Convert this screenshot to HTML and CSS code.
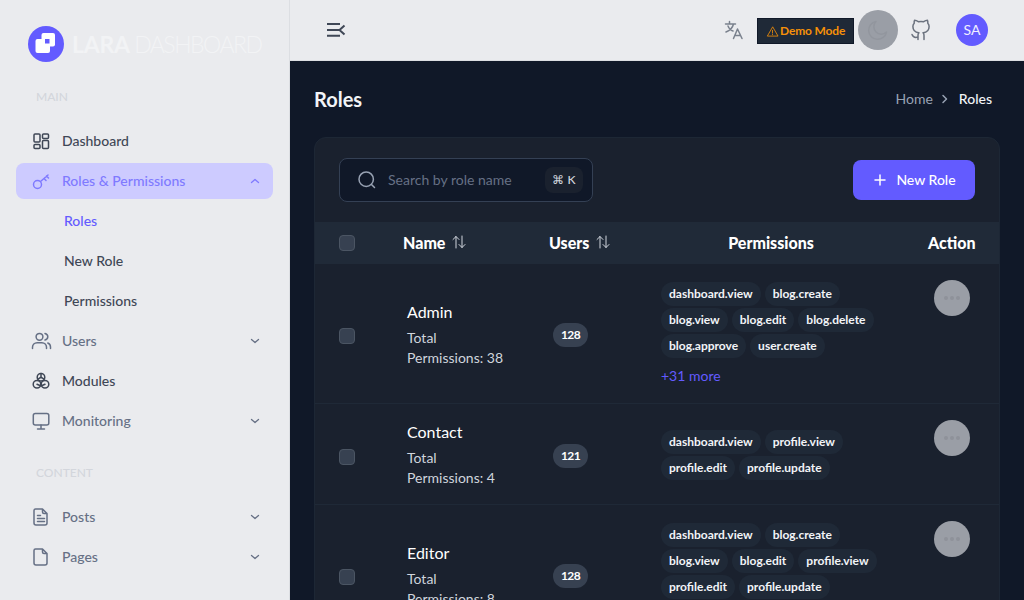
FILE: index.html
```html
<!DOCTYPE html>
<html>
<head>
    <title>Roles</title>
    <meta charset="UTF-8">
    <link rel="stylesheet" href="styles.css">
</head>
<body>
    <aside class="sidebar">
        <div class="logo">
            <svg class="logo-mark" width="36" height="36" viewBox="0 0 36 36">
                <circle cx="18" cy="18" r="18" fill="#635bff"/>
                <rect x="13.500" y="7" width="13.500" height="13.500" rx="2" fill="#fff"/>
                <rect x="7.500" y="13" width="14.500" height="14" rx="2" fill="#fff"/>
                <rect x="17" y="13" width="4.500" height="4.500" fill="#635bff"/>
            </svg>
            <span class="logo-text"><b>LARA</b> <span>DASHBOARD</span></span>
        </div>
        <div class="nav-label">MAIN</div>
        <ul class="nav">
            <li class="nav-item dark">
                <svg class="icon" viewBox="0 0 24 24"><rect x="5" y="5" width="6" height="8" rx="1"/><rect x="13.500" y="5" width="6" height="4.500" rx="1"/><rect x="5" y="15.500" width="6" height="4" rx="1"/><rect x="13.500" y="11.500" width="6" height="8" rx="1"/></svg>
                Dashboard
            </li>
            <li class="nav-item active">
                <svg class="icon" viewBox="0 0 24 24"><circle cx="8.500" cy="15.500" r="4"/><path d="M11.500 12.500 19 6M15 9.500l2 2M17.500 7l2 2"/></svg>
                Roles &amp; Permissions
                <svg class="caret" viewBox="0 0 16 16"><path d="M4.500 9.500 8 6.500l3.500 3"/></svg>
            </li>
            <li class="sub-item current">Roles</li>
            <li class="sub-item">New Role</li>
            <li class="sub-item">Permissions</li>
            <li class="nav-item">
                <svg class="icon" viewBox="0 0 24 24"><circle cx="10.500" cy="7.800" r="3.400"/><path d="M3.500 19.500v-1.200c0-2.600 2-4.600 4.600-4.600h4.800c2.600 0 4.600 2 4.600 4.600v1.200M16 4.600c1.700.4 2.800 1.700 2.800 3.200S17.700 10.600 16 11M18.800 14c1.700.7 2.700 2.200 2.700 4v1.500"/></svg>
                Users
                <svg class="caret" viewBox="0 0 16 16"><path d="M4.500 6.500 8 9.500l3.500-3"/></svg>
            </li>
            <li class="nav-item dark">
                <svg class="icon" viewBox="0 0 24 24"><circle cx="12" cy="8.200" r="3.800"/><circle cx="8" cy="15.200" r="3.800"/><circle cx="16" cy="15.200" r="3.800"/><path d="M12 4.500v3.700l3 2M12 8.200l-3 2M8 15.200l3.500 1.500M16 15.200l-3.500 1.500"/></svg>
                Modules
            </li>
            <li class="nav-item">
                <svg class="icon" viewBox="0 0 24 24"><rect x="4.300" y="4.500" width="15.500" height="11.500" rx="2"/><path d="M12 16v3.500M8.500 20h7"/></svg>
                Monitoring
                <svg class="caret" viewBox="0 0 16 16"><path d="M4.500 6.500 8 9.500l3.500-3"/></svg>
            </li>
        </ul>
        <div class="nav-label content-label">CONTENT</div>
        <ul class="nav">
            <li class="nav-item">
                <svg class="icon" viewBox="0 0 24 24"><path d="M6.500 4h7l4.500 4.500V18a2 2 0 0 1-2 2H7a2 2 0 0 1-2-2V5.500A1.500 1.500 0 0 1 6.500 4zM13.500 4v3a1.500 1.500 0 0 0 1.500 1.500h3M8.500 10.500h3M8.500 13.500h7M8.500 16.500h7"/></svg>
                Posts
                <svg class="caret" viewBox="0 0 16 16"><path d="M4.500 6.500 8 9.500l3.500-3"/></svg>
            </li>
            <li class="nav-item">
                <svg class="icon" viewBox="0 0 24 24"><path d="M6.500 4h7l4.500 4.500V18a2 2 0 0 1-2 2H7a2 2 0 0 1-2-2V5.500A1.500 1.500 0 0 1 6.500 4zM13.500 4v3a1.500 1.500 0 0 0 1.500 1.500h3"/></svg>
                Pages
                <svg class="caret" viewBox="0 0 16 16"><path d="M4.500 6.500 8 9.500l3.500-3"/></svg>
            </li>
        </ul>
    </aside>

    <div class="page">
        <header class="topbar">
            <svg class="menu-toggle" width="24" height="24" viewBox="0 0 24 24"><path d="M3 6h13M3 12h13M3 17.800h13M20.500 7.500l-5 4.500 5 4.500"/></svg>
            <div class="topbar-right">
                <svg class="translate" width="20" height="20" viewBox="0 0 20 20"><path d="M1.500 4h10M5.500 1.500V4M9.500 4c-.8 3.500-3.500 6.500-7.500 8M4 6c1 2.500 3 4.500 5 5M9.500 18.500 13.500 9l4.500 9.500M11 15.500h5.500"/></svg>
                <span class="demo-badge">
                    <svg width="13" height="13" viewBox="0 0 24 24"><path d="M12 4 2.500 20.500h19zM12 10v5M12 17.500v.5"/></svg>
                    Demo Mode
                </span>
                <span class="theme-btn">
                    <svg width="24" height="24" viewBox="0 0 24 24"><path d="M20.500 14A9 9 0 1 1 10 3.500 7 7 0 0 0 20.500 14z"/></svg>
                </span>
                <svg class="github" width="24" height="24" viewBox="0 0 24 24"><path d="M15 21.500v-4a4 4 0 0 0-.9-2.800c3-.3 6-1.400 6-6.200a4.800 4.800 0 0 0-1.300-3.300c.1-1.200 0-2.400-.4-3-1.200 0-2.500.6-3.700 1.500a13 13 0 0 0-5.400 0C8.100 2.800 6.800 2.200 5.600 2.200c-.4.600-.5 1.800-.4 3A4.800 4.800 0 0 0 3.900 8.500c0 4.800 3 5.900 6 6.200a4 4 0 0 0-.9 2.800v4M9 19c-3 1-5 0-6-2.500"/></svg>
                <span class="avatar">SA</span>
            </div>
        </header>

        <main class="content">
            <div class="title-row">
                <h1>Roles</h1>
                <div class="crumbs">
                    <span>Home</span>
                    <svg width="12" height="12" viewBox="0 0 12 12"><path d="M4 2.500 7.500 6 4 9.500"/></svg>
                    <b>Roles</b>
                </div>
            </div>

            <section class="card">
                <div class="toolbar">
                    <div class="search">
                        <svg width="20" height="20" viewBox="0 0 20 20"><circle cx="9.200" cy="9.200" r="7.200"/><path d="m14.500 14.500 3 3"/></svg>
                        <span class="placeholder">Search by role name</span>
                        <span class="kbd">⌘ K</span>
                    </div>
                    <button class="new-btn">
                        <svg width="16" height="16" viewBox="0 0 16 16"><path d="M8 3v10M3 8h10"/></svg>
                        New Role
                    </button>
                </div>

                <div class="row head">
                    <div class="c-check"><span class="check"></span></div>
                    <div class="c-name">Name <svg class="sort" width="16" height="16" viewBox="0 0 16 16"><path d="M5 14V2.500M2 5.500l3-3 3 3M11 2v11.500M8 10.500l3 3 3-3"/></svg></div>
                    <div class="c-users">Users <svg class="sort" width="16" height="16" viewBox="0 0 16 16"><path d="M5 14V2.500M2 5.500l3-3 3 3M11 2v11.500M8 10.500l3 3 3-3"/></svg></div>
                    <div class="c-perms">Permissions</div>
                    <div class="c-action">Action</div>
                </div>

                <div class="row">
                    <div class="c-check"><span class="check"></span></div>
                    <div class="c-name">
                        <div class="role-name">Admin</div>
                        <div class="role-total">Total Permissions: 38</div>
                    </div>
                    <div class="c-users"><span class="count">128</span></div>
                    <div class="c-perms">
                        <div class="chips">
                            <span class="chip">dashboard.view</span><span class="chip">blog.create</span><span class="chip">blog.view</span><span class="chip">blog.edit</span><span class="chip">blog.delete</span><span class="chip">blog.approve</span><span class="chip">user.create</span>
                        </div>
                        <div class="more">+31 more</div>
                    </div>
                    <div class="c-action"><span class="dots-btn"><i></i><i></i><i></i></span></div>
                </div>

                <div class="row">
                    <div class="c-check"><span class="check"></span></div>
                    <div class="c-name">
                        <div class="role-name">Contact</div>
                        <div class="role-total">Total Permissions: 4</div>
                    </div>
                    <div class="c-users"><span class="count">121</span></div>
                    <div class="c-perms">
                        <div class="chips">
                            <span class="chip">dashboard.view</span><span class="chip">profile.view</span><span class="chip">profile.edit</span><span class="chip">profile.update</span>
                        </div>
                    </div>
                    <div class="c-action"><span class="dots-btn"><i></i><i></i><i></i></span></div>
                </div>

                <div class="row">
                    <div class="c-check"><span class="check"></span></div>
                    <div class="c-name">
                        <div class="role-name">Editor</div>
                        <div class="role-total">Total Permissions: 8</div>
                    </div>
                    <div class="c-users"><span class="count">128</span></div>
                    <div class="c-perms">
                        <div class="chips">
                            <span class="chip">dashboard.view</span><span class="chip">blog.create</span><span class="chip">blog.view</span><span class="chip">blog.edit</span><span class="chip">profile.view</span><span class="chip">profile.edit</span><span class="chip">profile.update</span>
                        </div>
                        <div class="more">+1 more</div>
                    </div>
                    <div class="c-action"><span class="dots-btn"><i></i><i></i><i></i></span></div>
                </div>
            </section>
        </main>
    </div>
</body>
</html>
```

FILE: styles.css
```css
* {
    box-sizing: border-box;
}

html, body {
    height: 100%;
}

body {
    margin: 0;
    display: flex;
    height: 600px;
    overflow: hidden;
    font-family: "Lato", "Liberation Sans", sans-serif;
    font-size: 14px;
    line-height: 20px;
    background: #101828;
}

svg {
    fill: none;
    stroke: currentColor;
    stroke-width: 1.5;
    stroke-linecap: round;
    stroke-linejoin: round;
    flex: none;
}

ul {
    list-style: none;
    margin: 0;
    padding: 0;
}

/* sidebar */
.sidebar {
    width: 290px;
    flex: none;
    background: #eaebee;
    border-right: 1px solid #dcdee2;
    padding: 26px 16px 0;
}

.logo {
    display: flex;
    align-items: center;
    gap: 8px;
    margin-left: 12px;
    height: 36px;
}

.logo-mark {
    stroke: none;
}

.logo-text {
    color: #f2f3f5;
    font-size: 23px;
    line-height: 28px;
    font-weight: 300;
    white-space: nowrap;
}

.logo-text b {
    font-weight: 700;
    letter-spacing: -.2px;
}

.logo-text span {
    margin-left: -2px;
    letter-spacing: -1.5px;
}

.nav-label {
    margin: 25px 0 16px 20px;
    height: 20px;
    font-size: 12px;
    font-weight: 500;
    color: #d3d6dc;
}

.content-label {
    margin-top: 24px;
}

.nav {
    display: flex;
    flex-direction: column;
    gap: 4px;
}

.nav-item {
    display: flex;
    align-items: center;
    gap: 9px;
    height: 36px;
    padding: 0 10px 0 13px;
    border-radius: 8px;
    color: #667085;
    font-weight: 500;
}

.nav-item.dark {
    color: #3f4756;
}

.nav-item.active {
    background: #cdcbff;
    color: #7f7aff;
}

.icon {
    width: 24px;
    height: 24px;
}

.caret {
    width: 16px;
    height: 16px;
    margin-left: auto;
    stroke-width: 1.3;
}

.sub-item {
    height: 36px;
    line-height: 36px;
    padding-left: 48px;
    color: #3f4756;
    font-weight: 500;
}

.sub-item.current {
    color: #635bff;
}

/* top bar */
.page {
    flex: 1;
    min-width: 0;
}

.topbar {
    height: 61px;
    background: #eaebee;
    border-bottom: 1px solid #dcdee2;
    display: flex;
    align-items: center;
    justify-content: space-between;
    padding: 0 36px 0 34px;
}

.menu-toggle {
    color: #3f4756;
    stroke-width: 2;
    stroke-linecap: butt;
}

.topbar-right {
    display: flex;
    align-items: center;
}

.translate {
    color: #7a818d;
    margin-right: 13px;
}

.demo-badge {
    display: flex;
    align-items: center;
    gap: 1px;
    width: 97px;
    height: 26px;
    margin-top: 2px;
    padding-left: 8px;
    background: #1f2937;
    border: 1px solid #101828;
    color: #f59008;
    font-size: 12px;
    font-weight: 700;
    letter-spacing: -.15px;
}

.theme-btn {
    width: 40px;
    height: 40px;
    margin-left: 4px;
    border-radius: 50%;
    background: #9a9ea6;
    color: #92969e;
    display: flex;
    align-items: center;
    justify-content: center;
}

.github {
    color: #6b727e;
    margin-left: 11px;
}

.avatar {
    width: 32px;
    height: 32px;
    margin-left: 23px;
    border-radius: 50%;
    background: #635bff;
    color: #f0efff;
    font-size: 14px;
    display: flex;
    align-items: center;
    justify-content: center;
}

/* content */
.content {
    padding: 0 24px;
}

.title-row {
    height: 76px;
    display: flex;
    align-items: center;
    justify-content: space-between;
}

h1 {
    margin: 0;
    font-size: 20px;
    line-height: 28px;
    font-weight: 700;
    color: #f2f4f7;
}

.crumbs {
    display: flex;
    align-items: center;
    gap: 6px;
    color: #98a2b3;
    margin-right: 8px;
}

.crumbs svg {
    margin-right: 2px;
}

.crumbs b {
    color: #f2f4f7;
    font-weight: 500;
}

.card {
    border: 1px solid #1d2735;
    border-radius: 12px 12px 0 0;
    background: #1a212e;
}

.toolbar {
    display: flex;
    align-items: center;
    justify-content: space-between;
    padding: 20px 24px;
}

.search {
    width: 254px;
    height: 44px;
    display: flex;
    align-items: center;
    padding: 0 9px 0 17px;
    background: #101828;
    border: 1px solid #344054;
    border-radius: 8px;
    color: #98a2b3;
}

.placeholder {
    margin-left: 11px;
    color: #667085;
}

.kbd {
    margin-left: auto;
    width: 38px;
    height: 26px;
    line-height: 26px;
    text-align: center;
    background: #1a212e;
    border-radius: 8px;
    color: #d0d5dd;
    font-size: 12px;
    font-weight: 500;
}

.new-btn {
    width: 122px;
    height: 40px;
    border: 0;
    border-radius: 8px;
    background: #635bff;
    color: #fff;
    font: 500 14px/20px "Lato", "Liberation Sans", sans-serif;
    display: flex;
    align-items: center;
    justify-content: center;
    gap: 8px;
}

/* table */
.row {
    display: grid;
    grid-template-columns: 84px 146px 112px 228px 1fr;
    border-bottom: 1px solid #1f2937;
    padding: 16px 0;
    align-items: center;
    color: #fff;
}

.row.head {
    height: 42px;
    padding: 0;
    background: #202a38;
    border-bottom: 0;
    font-size: 16px;
    line-height: 24px;
    font-weight: 900;
}

.c-check {
    padding-left: 24px;
    display: flex;
}

.check {
    width: 16px;
    height: 16px;
    margin-top: 5px;
    border: 1px solid #4b5563;
    border-radius: 4px;
    background: #374151;
}

.head .check {
    margin-top: 0;
}

.row .c-name {
    padding-left: 8px;
}

.row .c-users {
    padding-left: 8px;
    margin-top: 3px;
}

.head .c-name,
.head .c-users {
    padding-left: 4px;
    margin-top: 0;
    display: flex;
    align-items: center;
    gap: 6px;
}

.sort {
    color: #d0d5dd;
    stroke-width: 1;
    margin-top: -3px;
}

.c-perms {
    padding: 2px 0 1px 4px;
}

.head .c-perms {
    padding: 0;
    text-align: center;
}

.c-action {
    padding-left: 49px;
    align-self: start;
}

.head .c-action {
    align-self: center;
    padding-left: 43px;
}

.role-name {
    font-size: 16px;
    line-height: 24px;
    margin-bottom: 4px;
}

.role-total {
    line-height: 20px;
    color: #d0d5dd;
    width: 100px;
}

.count {
    display: block;
    width: fit-content;
    padding: 0 8px;
    height: 24px;
    line-height: 24px;
    border-radius: 12px;
    background: #374151;
    font-size: 12px;
    font-weight: 700;
    letter-spacing: -.6px;
}

.chips {
    display: flex;
    flex-wrap: wrap;
    gap: 2px 4px;
}

.chip {
    height: 24px;
    line-height: 24px;
    padding: 0 8px;
    border-radius: 12px;
    background: #1f2937;
    font-size: 12px;
    font-weight: 700;
    color: #f2f4f7;
}

.more {
    margin-top: 8px;
    line-height: 20px;
    font-size: 14px;
    color: #635bff;
}

.dots-btn {
    display: flex;
    align-items: center;
    justify-content: center;
    gap: 2px;
    width: 36px;
    height: 36px;
    border-radius: 50%;
    background: #9a9ea6;
}

.dots-btn i {
    width: 4px;
    height: 4px;
    border-radius: 50%;
    background: #8e929a;
}
```
